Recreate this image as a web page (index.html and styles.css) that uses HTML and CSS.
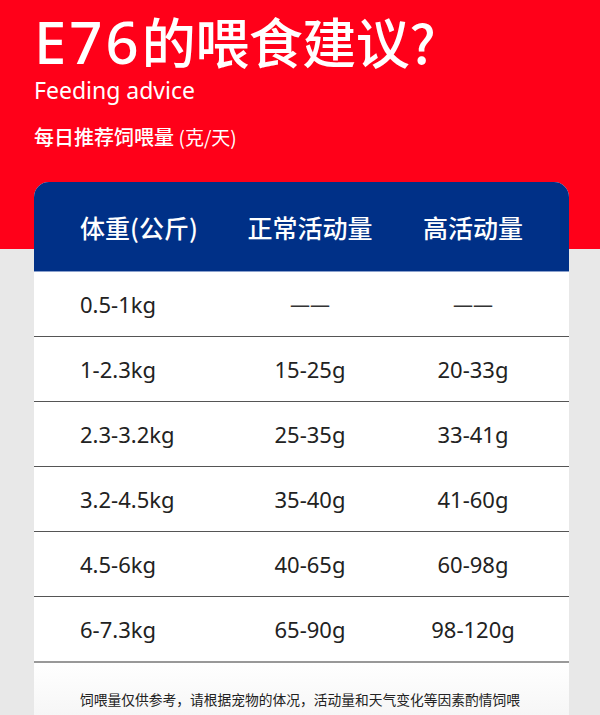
FILE: index.html
```html
<!DOCTYPE html>
<html lang="zh">
<head>
<meta charset="utf-8">
<title>E76的喂食建议</title>
<link rel="stylesheet" href="styles.css">
</head>
<body>
<div class="page">
  <header class="hero">
    <h1 class="title"><span class="model">E76</span>的喂食建议?</h1>
    <p class="subtitle">Feeding advice</p>
    <p class="caption">每日推荐饲喂量 <span class="unit">(克/天)</span></p>
  </header>
  <section class="card">
    <div class="row head">
      <div class="c1">体重(公斤)</div>
      <div class="c2">正常活动量</div>
      <div class="c3">高活动量</div>
    </div>
    <div class="row">
      <div class="c1">0.5-1kg</div>
      <div class="c2 dash">——</div>
      <div class="c3 dash">——</div>
    </div>
    <div class="row">
      <div class="c1">1-2.3kg</div>
      <div class="c2">15-25g</div>
      <div class="c3">20-33g</div>
    </div>
    <div class="row">
      <div class="c1">2.3-3.2kg</div>
      <div class="c2">25-35g</div>
      <div class="c3">33-41g</div>
    </div>
    <div class="row">
      <div class="c1">3.2-4.5kg</div>
      <div class="c2">35-40g</div>
      <div class="c3">41-60g</div>
    </div>
    <div class="row">
      <div class="c1">4.5-6kg</div>
      <div class="c2">40-65g</div>
      <div class="c3">60-98g</div>
    </div>
    <div class="row last">
      <div class="c1">6-7.3kg</div>
      <div class="c2">65-90g</div>
      <div class="c3">98-120g</div>
    </div>
    <p class="note">饲喂量仅供参考，请根据宠物的体况，活动量和天气变化等因素酌情饲喂</p>
  </section>
</div>
</body>
</html>
```
FILE: styles.css
```css
html, body {
  margin: 0;
  padding: 0;
}
body {
  width: 600px;
  height: 715px;
  overflow: hidden;
  background: linear-gradient(#ff0019 0, #ff0019 249px, #e8e8e8 249px);
  font-family: "Noto Sans CJK SC", "Noto Sans", sans-serif;
}
.page {
  width: 600px;
}
.hero {
  padding: 10px 0 0 34px;
  color: #fff;
  height: 169px;
  box-sizing: border-box;
}
.title {
  margin: 0;
  font-size: 54px;
  font-weight: 500;
  line-height: 62px;
  height: 62px;
  white-space: nowrap;
  letter-spacing: -0.5px;
}
.model {
  font-family: "Noto Sans", sans-serif;
  font-size: 58px;
  line-height: 1;
  letter-spacing: 3px;
}
.subtitle {
  margin: 4px 0 0;
  font-family: "Noto Sans", "Noto Sans CJK SC", sans-serif;
  font-size: 23px;
  line-height: 28px;
  font-weight: 400;
}
.caption {
  margin: 19px 0 0;
  font-size: 20px;
  line-height: 28px;
  font-weight: 500;
}
.unit {
  font-size: 19px;
  font-weight: 400;
}
.card {
  margin: 13px 0 0 34px;
  width: 535px;
  background: #fff;
  border-radius: 15px 15px 0 0;
  overflow: hidden;
}
.row {
  display: grid;
  grid-template-columns: 196px 160px 166px 13px;
  align-items: center;
  height: 64px;
  border-bottom: 1px solid #555;
  font-family: "Noto Sans", "Noto Sans CJK SC", sans-serif;
  font-size: 22px;
  color: #222;
}
.row.head {
  height: 89px;
  background: #003087;
  color: #fff;
  border-bottom: 1px solid #8aa0cc;
  font-family: "Noto Sans CJK SC", sans-serif;
  font-size: 25px;
  font-weight: 500;
}
.row.last {
  border-bottom: 2px solid #999;
}
.c1 {
  padding-left: 46px;
}
.c2, .c3 {
  text-align: center;
}
.dash {
  color: #333;
  font-size: 20px;
}
.note {
  margin: 0;
  padding: 25px 0 6px 46px;
  font-size: 13.75px;
  line-height: 22px;
  color: #222;
  background: linear-gradient(#fff, #f6f6f6);
  white-space: nowrap;
}
```
